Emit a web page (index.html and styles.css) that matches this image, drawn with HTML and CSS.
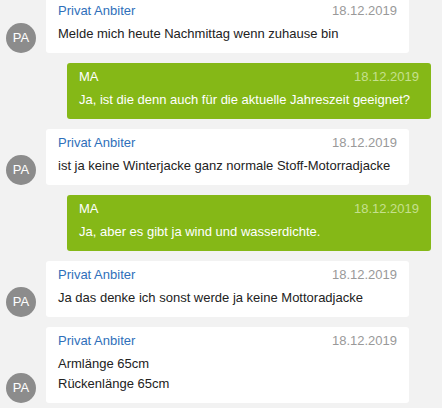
FILE: index.html
```html
<!DOCTYPE html>
<html lang="de">
<head>
    <meta charset="UTF-8">
    <meta name="viewport" content="width=device-width, initial-scale=1.0">
    <title>Nachrichten</title>
    <link rel="stylesheet" href="styles.css">
</head>
<body>
    <div class="chat">
        <div class="msg in">
            <div class="avatar">PA</div>
            <div class="bubble">
                <div class="msg-head"><span class="name">Privat Anbiter</span><span class="date">18.12.2019</span></div>
                <div class="text">Melde mich heute Nachmittag wenn zuhause bin</div>
            </div>
        </div>

        <div class="msg out">
            <div class="bubble">
                <div class="msg-head"><span class="name">MA</span><span class="date">18.12.2019</span></div>
                <div class="text">Ja, ist die denn auch für die aktuelle Jahreszeit geeignet?</div>
            </div>
        </div>

        <div class="msg in">
            <div class="avatar">PA</div>
            <div class="bubble">
                <div class="msg-head"><span class="name">Privat Anbiter</span><span class="date">18.12.2019</span></div>
                <div class="text">ist ja keine Winterjacke ganz normale Stoff-Motorradjacke</div>
            </div>
        </div>

        <div class="msg out">
            <div class="bubble">
                <div class="msg-head"><span class="name">MA</span><span class="date">18.12.2019</span></div>
                <div class="text">Ja, aber es gibt ja wind und wasserdichte.</div>
            </div>
        </div>

        <div class="msg in">
            <div class="avatar">PA</div>
            <div class="bubble">
                <div class="msg-head"><span class="name">Privat Anbiter</span><span class="date">18.12.2019</span></div>
                <div class="text">Ja das denke ich sonst werde ja keine Mottoradjacke</div>
            </div>
        </div>

        <div class="msg in">
            <div class="avatar">PA</div>
            <div class="bubble">
                <div class="msg-head"><span class="name">Privat Anbiter</span><span class="date">18.12.2019</span></div>
                <div class="text">Armlänge 65cm<br>Rückenlänge 65cm</div>
            </div>
        </div>
    </div>
</body>
</html>
```

FILE: styles.css
```css
* { margin: 0; padding: 0; box-sizing: border-box; }
body {
    font-family: 'Liberation Sans', Arial, sans-serif;
    font-size: 13px;
    color: #222;
    background: #f2f2f2;
    overflow: hidden;
}
.chat {
    display: flex;
    flex-direction: column;
    gap: 10px;
    margin-top: -3px;
}
.msg { display: flex; align-items: flex-end; }
.msg.in { padding: 0 33px 0 6px; gap: 10px; }
.msg.out { padding: 0 11px 0 67px; }
.avatar {
    width: 30px; height: 30px;
    flex-shrink: 0;
    border-radius: 50%;
    background: #8c8c8c;
    color: #fff;
    font-size: 13px;
    line-height: 30px;
    text-align: center;
}
.bubble {
    flex: 1;
    background: #fff;
    border-radius: 3px;
    padding: 4px 12px 9px;
}
.msg-head {
    display: flex;
    justify-content: space-between;
    line-height: 20px;
    margin-bottom: 3px;
}
.name { color: #2f6fba; }
.date { color: #999; }
.text { line-height: 20px; }
.out .bubble { background: #85b817; color: #fff; }
.out .name { color: #fff; }
.out .date { color: #c6e08e; }
```
